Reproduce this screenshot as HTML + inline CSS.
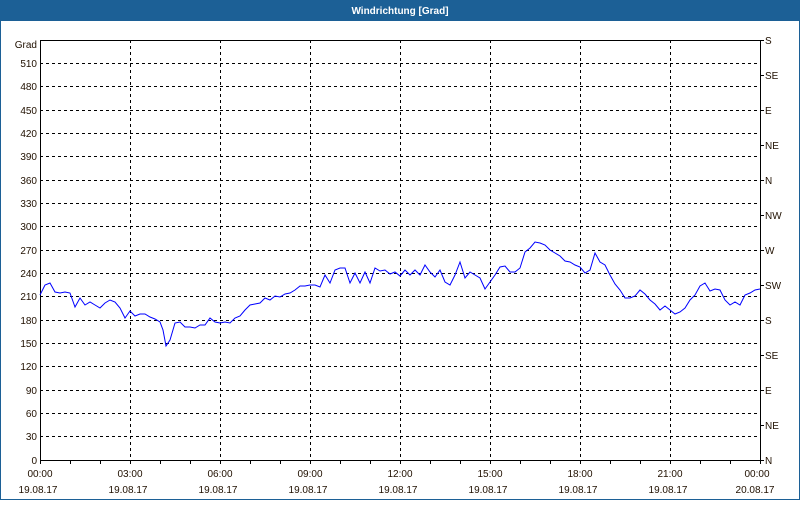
<!DOCTYPE html>
<html><head><style>
body{margin:0;width:800px;height:500px;overflow:hidden;background:#fff;}
</style></head><body>
<svg width="800" height="500" xmlns="http://www.w3.org/2000/svg" font-family="Liberation Sans, sans-serif" font-size="10" fill="#201000">
<rect x="0.5" y="0.5" width="799" height="499" fill="#fff" stroke="#1c6096"/>
<rect x="0" y="0" width="800" height="21" fill="#1c6096"/>
<text x="400" y="14" text-anchor="middle" fill="#fff" font-weight="bold" font-size="10">Windrichtung [Grad]</text>
<g stroke="#000" stroke-dasharray="3,3" stroke-width="1">
<line x1="40" x2="760" y1="63.5" y2="63.5"/><line x1="40" x2="760" y1="86.5" y2="86.5"/><line x1="40" x2="760" y1="110.5" y2="110.5"/><line x1="40" x2="760" y1="133.5" y2="133.5"/><line x1="40" x2="760" y1="156.5" y2="156.5"/><line x1="40" x2="760" y1="180.5" y2="180.5"/><line x1="40" x2="760" y1="203.5" y2="203.5"/><line x1="40" x2="760" y1="226.5" y2="226.5"/><line x1="40" x2="760" y1="250.5" y2="250.5"/><line x1="40" x2="760" y1="273.5" y2="273.5"/><line x1="40" x2="760" y1="296.5" y2="296.5"/><line x1="40" x2="760" y1="320.5" y2="320.5"/><line x1="40" x2="760" y1="343.5" y2="343.5"/><line x1="40" x2="760" y1="366.5" y2="366.5"/><line x1="40" x2="760" y1="390.5" y2="390.5"/><line x1="40" x2="760" y1="413.5" y2="413.5"/><line x1="40" x2="760" y1="436.5" y2="436.5"/>
<line x1="130.5" x2="130.5" y1="40" y2="460"/><line x1="220.5" x2="220.5" y1="40" y2="460"/><line x1="310.5" x2="310.5" y1="40" y2="460"/><line x1="400.5" x2="400.5" y1="40" y2="460"/><line x1="490.5" x2="490.5" y1="40" y2="460"/><line x1="580.5" x2="580.5" y1="40" y2="460"/><line x1="670.5" x2="670.5" y1="40" y2="460"/>
</g>
<rect x="40.5" y="40.5" width="720" height="420" fill="none" stroke="#000"/>
<g stroke="#000">
<path d="M70.5 460v4M100.5 460v4M130.5 460v4M160.5 460v4M190.5 460v4M220.5 460v4M250.5 460v4M280.5 460v4M310.5 460v4M340.5 460v4M370.5 460v4M400.5 460v4M430.5 460v4M460.5 460v4M490.5 460v4M520.5 460v4M550.5 460v4M580.5 460v4M610.5 460v4M640.5 460v4M670.5 460v4M700.5 460v4M730.5 460v4M760.5 460v4M40.5 460v4"/>
<path d="M760 40.5h4M760 75.5h4M760 110.5h4M760 145.5h4M760 180.5h4M760 215.5h4M760 250.5h4M760 285.5h4M760 320.5h4M760 355.5h4M760 390.5h4M760 425.5h4M760 460.5h4"/>
</g>
<polyline fill="none" stroke="#0000ff" stroke-width="1" points="40,295 45,285 50,283 55,292 60,293 65,292 70,293 75,307 80,298 85,305 90,302 95,305 100,308 105,303 110,300 115,302 120,308 125,318 130,311 135,316 140,314 145,314 150,317 155,319 160,322 163,330 166,346 170,340 175,323 180,322 185,327 190,327 195,328 200,325 205,325 210,318 215,322 220,323 225,322 230,323 235,318 240,316 245,310 250,305 255,304 260,303 265,298 270,300 275,296 280,297 285,294 290,293 295,290 300,286 305,286 310,285 315,285 320,287 325,275 330,283 335,270 340,268 345,268 350,283 355,273 360,283 365,272 370,283 375,268 380,271 385,270 390,274 395,272 400,276 405,270 410,275 415,270 420,275 425,265 430,272 435,277 440,270 445,282 450,285 455,275 460,262 465,278 470,272 475,275 480,278 485,289 490,282 495,275 500,267 505,266 510,272 515,272 520,268 525,252 530,248 535,242 540,243 545,245 550,250 555,253 560,256 565,261 570,262 575,265 580,267 585,273 590,270 595,253 600,262 605,265 610,275 615,284 620,290 625,298 630,298 635,296 640,290 645,294 650,300 655,304 660,310 665,306 670,310 675,314 680,312 685,308 690,300 695,295 700,286 705,283 710,291 715,289 720,290 725,300 730,305 735,302 740,305 745,295 750,293 755,290 760,289"/>
<g text-anchor="end">
<text x="37" y="48">Grad</text>
<text x="37" y="67">510</text><text x="37" y="90">480</text><text x="37" y="114">450</text><text x="37" y="137">420</text><text x="37" y="160">390</text><text x="37" y="184">360</text><text x="37" y="207">330</text><text x="37" y="230">300</text><text x="37" y="254">270</text><text x="37" y="277">240</text><text x="37" y="300">210</text><text x="37" y="324">180</text><text x="37" y="347">150</text><text x="37" y="370">120</text><text x="37" y="394">90</text><text x="37" y="417">60</text><text x="37" y="440">30</text><text x="37" y="464">0</text>
</g>
<g>
<text x="765" y="44">S</text><text x="765" y="79">SE</text><text x="765" y="114">E</text><text x="765" y="149">NE</text><text x="765" y="184">N</text><text x="765" y="219">NW</text><text x="765" y="254">W</text><text x="765" y="289">SW</text><text x="765" y="324">S</text><text x="765" y="359">SE</text><text x="765" y="394">E</text><text x="765" y="429">NE</text><text x="765" y="464">N</text>
</g>
<g text-anchor="middle">
<text x="40" y="477">00:00</text><text x="130" y="477">03:00</text><text x="220" y="477">06:00</text><text x="310" y="477">09:00</text><text x="400" y="477">12:00</text><text x="490" y="477">15:00</text><text x="580" y="477">18:00</text><text x="670" y="477">21:00</text><text x="757" y="477">00:00</text>
<text x="38" y="493">19.08.17</text><text x="128" y="493">19.08.17</text><text x="218" y="493">19.08.17</text><text x="308" y="493">19.08.17</text><text x="398" y="493">19.08.17</text><text x="488" y="493">19.08.17</text><text x="578" y="493">19.08.17</text><text x="668" y="493">19.08.17</text><text x="755" y="493">20.08.17</text>
</g>
</svg>
</body></html>
